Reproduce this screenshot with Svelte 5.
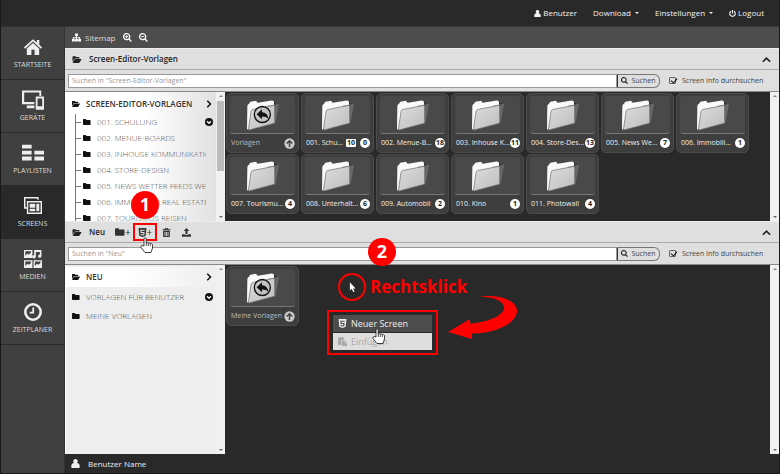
<script>
	const navItems = [
		{ label: 'STARTSEITE', icon: 'home' },
		{ label: 'GERÄTE', icon: 'devices' },
		{ label: 'PLAYLISTEN', icon: 'playlist' },
		{ label: 'SCREENS', icon: 'screens' },
		{ label: 'MEDIEN', icon: 'media' },
		{ label: 'ZEITPLANER', icon: 'clock' }
	];

	const templateTree = [
		{ label: '001. SCHULUNG', more: true },
		{ label: '002. MENUE-BOARDS' },
		{ label: '003. INHOUSE KOMMUNIKATION' },
		{ label: '004. STORE-DESIGN' },
		{ label: '005. NEWS WETTER FEEDS WE' },
		{ label: '006. IMMOBILIEN REAL ESTATE' },
		{ label: '007. TOURISMUS REISEN' }
	];

	const newTree = [{ label: 'VORLAGEN FÜR BENUTZER', more: true }, { label: 'MEINE VORLAGEN' }];

	const templates = [
		{ label: 'Vorlagen', up: true },
		{ label: '001. Schu...', folders: 10, count: 0 },
		{ label: '002. Menue-B...', count: 18 },
		{ label: '003. Inhouse K...', count: 11 },
		{ label: '004. Store-Des...', count: 13 },
		{ label: '005. News We...', count: 7 },
		{ label: '006. Immobili...', count: 1 },
		{ label: '007. Tourismu...', count: 4 },
		{ label: '008. Unterhalt...', count: 6 },
		{ label: '009. Automobil', count: 2 },
		{ label: '010. Kino', count: 1 },
		{ label: '011. Photowall', count: 4 }
	];

	let searchTemplates = $state('');
	let searchNew = $state('');
</script>

{#snippet icon(name)}
	<svg class="icon {name}" viewBox="0 0 16 16" aria-hidden="true">
		{#if name === 'home'}
			<path d="M8 1 0 8.3l1 1.2L8 3.2l7 6.3 1-1.2-2.4-2.2V1.8h-2.2v2.3zM8 4.4 2.5 9.3V15h4.1v-4.5h2.8V15h4.1V9.3z" />
		{:else if name === 'devices'}
			<path d="M0 1h14v4h-1.4V2.600H1.600v6.800H9V11H0zM3.500 12H9v2H3.500zM10 5.500h6v9.500h-6zm1.300 1.400v5.600h3.400V6.900z" fill-rule="evenodd" />
		{:else if name === 'playlist'}
			<path d="M0 2h7v2.800H0zM0 6.300h7v2.800H0zM0 10.600h7v2.800H0zM9 6.300h7v2.800H9zM9 10.600h7v2.800H9z" />
		{:else if name === 'screens'}
			<path d="M0 0h13v2.500h-1.300V1.300H1.300v7.900H2.500v1.300H0zM2.500 3.500H16V15H2.500zm1.300 1.300v8.900h10.900V4.800zM5 6h5v3.500H5zM5 10.500h5v2.200H5zM11 6h2.600v6.700H11z" fill-rule="evenodd" />
		{:else if name === 'media'}
			<path d="M0 0h7.500v7H0zm1.200 1.200v4l1.800-2 1.200 1 2-2v-1zM9 0h6.500v5.500a1.500 1.500 0 1 1-1.400-1.500V1.800h-3.600V6A1.500 1.500 0 1 1 9 4.500zM0 9h7.500v7H0zm1.200 1.200v4l1.800-2 1.200 1 2-1.600v-1.400zM8.500 9H16v7H8.500zm1.200 1.200v4l1.800-2 1.200 1 2-1.600v-1.400z" fill-rule="evenodd" />
		{:else if name === 'clock'}
			<path d="M8 0a8 8 0 1 1 0 16A8 8 0 0 1 8 0zm0 2.300a5.700 5.700 0 1 0 0 11.400A5.700 5.700 0 0 0 8 2.300zM7.400 4H9v5.300H5V7.800h2.400z" fill-rule="evenodd" />
		{:else if name === 'sitemap'}
			<path d="M5.500 1h5v4.500H8.800V7H14v3.300h2V15h-5v-4.700h1.500V8.500H8.800v1.800h1.700V15h-5v-4.700h1.700V8.500H3.500v1.800H5V15H0v-4.700h2V7h5.200V5.500H5.500z" />
		{:else if name === 'zoom-in' || name === 'zoom-out' || name === 'magnifier'}
			<path d="M6.500 0a6.500 6.500 0 0 1 5.300 10.200l4 4-1.700 1.700-4-4A6.500 6.500 0 1 1 6.500 0zm0 2.200a4.300 4.300 0 1 0 0 8.600 4.300 4.300 0 0 0 0-8.600z" fill-rule="evenodd" />
			{#if name !== 'magnifier'}<path d="M3.800 5.700h5.400v1.600H3.800z" />{/if}
			{#if name === 'zoom-in'}<path d="M5.700 3.800h1.600v5.400H5.700z" />{/if}
		{:else if name === 'folder-open'}
			<path d="M0 12V3.500Q0 2 1.500 2H5q1.200 0 1.200 1.500H11q1.500 0 1.500 1.500v1H5Q3.500 6 2.600 7.500zM4.800 7.200H15.500q.8 0 .3.900l-3 4.900q-.6 1-1.800 1H.9q-.8 0-.3-.9l2.700-4.900q.5-1 1.500-1z" />
		{:else if name === 'folder'}
			<path d="M0 3.500Q0 2 1.500 2H5q1.500 0 1.500 1.800h7.200q1.500 0 1.500 1.500v7.200q0 1.500-1.500 1.500H1.500Q0 14 0 12.500z" />
		{:else if name === 'chevron-up'}
			<path d="m1.500 12 6.500-6.500 6.500 6.500" fill="none" stroke="currentColor" stroke-width="3" />
		{:else if name === 'chevron-right'}
			<path d="m4.500 1.500 6.500 6.500-6.500 6.500" fill="none" stroke="currentColor" stroke-width="3" />
		{:else if name === 'more'}
			<circle cx="8" cy="8" r="8" /><path d="m4 6.500 4 4 4-4" fill="none" stroke="#fff" stroke-width="2.500" />
		{:else if name === 'html5'}
			<path d="M1 0h14l-1.300 13.800L8 16l-5.700-2.200zm3 3 .5 5.700h5l-.2 2.300L8 11.500 6.500 11l-.1-1H4.600l.2 2.400L8 13.500l3.200-1.100.6-5.500H6.300L6.200 5h5.700l.2-2z" fill-rule="evenodd" />
		{:else if name === 'trash'}
			<path d="M5 2V0h6v2h4v2H1V2zm1.500 0h3v-.8h-3zM2 5h12v9.500q0 1.500-1.500 1.500h-9Q2 16 2 14.500zm2.500 2v7H6V7zM7.200 7v7h1.600V7zM10 7v7h1.500V7z" fill-rule="evenodd" />
		{:else if name === 'upload'}
			<path d="m8 0 5 5.500h-3.200V11H6.200V5.500H3zM0 11h5v1.500h6V11h5v4.500H0z" />
		{:else if name === 'user'}
			<path d="M8 0a4 4 0 0 1 2.500 7.200Q16 8 15.500 14q0 2-1.500 2H2Q.5 16 .5 14 0 8 5.500 7.200A4 4 0 0 1 8 0z" />
		{:else if name === 'power'}
			<path d="M4.500 3a6.300 6.300 0 1 0 7 0M8 0v8" fill="none" stroke="currentColor" stroke-width="2.600" />
		{:else if name === 'paste'}
			<path d="M0 1h3l1-1h3l1 1h3v4H6v9H0zM7 6h5v4h4v6H7zM13 6l3 3h-3z" />
		{:else if name === 'arrow-up'}
			<circle cx="8" cy="8" r="7.500" /><path d="M8 13V4M4 8l4-4 4 4" fill="none" stroke="#444" stroke-width="2.200" />
		{/if}
	</svg>
{/snippet}

{#snippet hand()}
	<svg class="hand" viewBox="0 0 14 16" aria-hidden="true">
		<path d="M4 9V1.500Q5 0 6.200 1.500V6q1.200-.8 2 .3 1.200-.7 2 .4 1.600-.6 2.300.8V11l-1.500 4.500h-6L1 10.500Q.5 8.500 2.500 8.500z" fill="#fff" stroke="#111" stroke-width=".8" />
		<path d="M6.300 6v3M8.300 6.500V9M10.300 7v2" stroke="#111" stroke-width=".7" />
	</svg>
{/snippet}

{#snippet card(item)}
	<a class="card" class:up={item.up} href="#folder">
		<span class="thumb">
			<svg class="picture" viewBox="0 0 96 92" aria-hidden="true">
				<path d="m2 91 2-74q0-5 5-7l3-5 17-3 4 6 45-7q5 0 5 7l7 1-9 57z" fill="#222" opacity=".5" />
				<path d="m0 88 1-70q0-5 5-7l4-6 17-3 5 6 42-7q7-1 7 6v57z" fill="#fafafa" />
				<path d="m62 17 34-6-10 56-24 5z" fill="#777" opacity=".7" />
				<path d="M12 34q1-5 5-6l61-12q5-1 5 4v49L4 90z" fill="url(#face)" stroke="#666" stroke-width="2" />
				{#if item.up}
					<circle cx="46" cy="43" r="24" fill="#bbb" fill-opacity=".6" stroke="#111" stroke-width="4" />
					<path d="m29 42 16-15v9q17 0 19 20-7-8-19-7v8z" fill="#111" />
				{/if}
			</svg>
		</span>
		<span class="caption">
			<span class="name">{item.label}</span>
			{#if item.folders}<span class="badge tab">{item.folders}</span>{/if}
			{#if item.up}{@render icon('arrow-up')}{:else}<span class="badge">{item.count}</span>{/if}
		</span>
	</a>
{/snippet}

{#snippet scrollbar(thumb)}
	<div class="scrollbar" aria-hidden="true">
		<i class="to-top"></i>
		{#if thumb}<i class="grip"></i>{/if}
		<i class="to-bottom"></i>
	</div>
{/snippet}

<svg class="defs" width="0" height="0" aria-hidden="true">
	<linearGradient id="face" x1="0" y1="0" x2="1" y2="1">
		<stop offset="0" stop-color="#ddd" />
		<stop offset="1" stop-color="#bdbdbd" />
	</linearGradient>
</svg>

<div class="app">
	<header>
		<a href="#user">{@render icon('user')}Benutzer</a>
		<a href="#download">Download<i class="caret"></i></a>
		<a href="#settings">Einstellungen<i class="caret"></i></a>
		<a href="#logout">{@render icon('power')}Logout</a>
	</header>

	<nav class="sidebar">
		{#each navItems as item}
			<a href="#{item.icon}" class:active={item.icon === 'screens'}>
				{@render icon(item.icon)}
				{item.label}
			</a>
		{/each}
	</nav>

	<main>
		<div class="toolbar">
			<a href="#sitemap">{@render icon('sitemap')}Sitemap</a>
			<button aria-label="Vergrößern">{@render icon('zoom-in')}</button>
			<button aria-label="Verkleinern">{@render icon('zoom-out')}</button>
		</div>

		<section class="panel">
			<div class="head">
				{@render icon('folder-open')}
				<h2>Screen-Editor-Vorlagen</h2>
				<button class="collapse" aria-label="Einklappen">{@render icon('chevron-up')}</button>
			</div>
			<form class="search">
				<input type="text" aria-label="Suchen" placeholder={'Suchen in "Screen-Editor-Vorlagen"'} bind:value={searchTemplates} />
				<button type="button">{@render icon('magnifier')}Suchen</button>
				<label><input type="checkbox" checked />Screen Info durchsuchen</label>
			</form>
			<div class="body first">
				<div class="tree nested">
					<div class="rows">
						<a class="root" href="#root">{@render icon('folder-open')}<span>SCREEN-EDITOR-VORLAGEN</span>{@render icon('chevron-right')}</a>
						<div class="branch">
							{#each templateTree as row}
								<a href="#row" class:plain={!row.more}>{@render icon('folder')}<span>{row.label}</span>{#if row.more}{@render icon('more')}{/if}</a>
							{/each}
						</div>
					</div>
					{@render scrollbar(true)}
				</div>
				<div class="cards">
					{#each templates as item}
						{@render card(item)}
					{/each}
				</div>
				{@render scrollbar(false)}
			</div>
		</section>

		<section class="panel grow">
			<div class="head">
				{@render icon('folder-open')}
				<h2>Neu</h2>
				<div class="actions">
					<button aria-label="Neuer Ordner">{@render icon('folder')}+</button>
					<button class="marked" aria-label="Neuer Screen">{@render icon('html5')}+{@render hand()}<b class="step one">1</b></button>
					<button aria-label="Löschen">{@render icon('trash')}</button>
					<button aria-label="Hochladen">{@render icon('upload')}</button>
				</div>
				<button class="collapse" aria-label="Einklappen">{@render icon('chevron-up')}</button>
			</div>
			<form class="search">
				<input type="text" aria-label="Suchen" placeholder={'Suchen in "Neu"'} bind:value={searchNew} />
				<button type="button">{@render icon('magnifier')}Suchen</button>
				<label><input type="checkbox" checked />Screen Info durchsuchen</label>
			</form>
			<div class="body">
				<div class="tree">
					<div class="rows">
						<a class="root" href="#root">{@render icon('folder-open')}<span>NEU</span>{@render icon('chevron-right')}</a>
						{#each newTree as row}
							<a href="#row">{@render icon('folder')}<span>{row.label}</span>{#if row.more}{@render icon('more')}{/if}</a>
						{/each}
					</div>
					{@render scrollbar(false)}
				</div>
				<div class="cards">
					{@render card({ label: 'Meine Vorlagen', up: true })}
				</div>
				{@render scrollbar(false)}

				<b class="step two">2</b>
				<div class="click-spot">
					<svg viewBox="0 0 8 12" aria-hidden="true"><path d="M1 0v9.500l2.200-2 1.500 3.700 1.600-.7L4.800 7h2.700z" fill="#fff" /></svg>
				</div>
				<strong class="click-label">Rechtsklick</strong>
				<div class="context">
					<button>{@render icon('html5')}Neuer Screen</button>
					<button disabled>{@render icon('paste')}Einfügen</button>
					{@render hand()}
				</div>
				<svg class="arrow" viewBox="0 0 70 46" aria-hidden="true">
					<path d="M32 1.500C52-.500 68 5 69 15.500 69 28 49 38 24 38.500V44L0 37l22-13v4.500C42 27 56 20 56 12.500 55.500 5 45 2.300 32 1.500z" fill="#f00" />
				</svg>
			</div>
		</section>
	</main>

	<footer>{@render icon('user')}Benutzer Name</footer>
</div>

<style>
	:global(body) {
		margin: 0;
		background: #292929;
	}

	.app,
	.app * {
		box-sizing: border-box;
	}

	.defs {
		position: absolute;
	}

	.app {
		display: grid;
		grid-template-columns: 64px minmax(0, 1fr);
		grid-template-rows: 26px 1fr 19px;
		min-height: 100vh;
		border: 1px solid #181818;
		border-top: 0;
		background: #292929;
		color: #ddd;
		font-family: 'Open Sans', sans-serif;
		font-size: 8px;
		line-height: 12px;
	}

	a {
		color: inherit;
		text-decoration: none;
	}

	button {
		display: flex;
		align-items: center;
		padding: 0;
		border: 0;
		background: none;
		color: inherit;
		font: inherit;
	}

	.icon {
		flex: none;
		width: 9px;
		height: 9px;
		fill: currentColor;
	}

	header {
		grid-column: 1 / 3;
		display: flex;
		align-items: center;
		justify-content: flex-end;
		gap: 16px;
		padding-right: 15px;
		color: #f2f2f2;
	}

	header a {
		display: flex;
		align-items: center;
		gap: 2px;
	}

	header .icon {
		width: 7px;
		height: 7px;
	}

	.caret {
		margin-left: 2px;
		border: 2px solid transparent;
		border-top-color: #eee;
		border-bottom: 0;
	}

	.sidebar {
		grid-row: 2 / 4;
		background: #404040;
		border-right: 1px solid #333;
		border-top: 1px solid #333;
	}

	.sidebar a {
		display: flex;
		flex-direction: column;
		align-items: center;
		gap: 4px;
		height: 53px;
		padding-top: 11px;
		border-bottom: 1px solid #292929;
		font-size: 7px;
		line-height: 9px;
	}

	.sidebar .active {
		background: #292929;
	}

	.sidebar .icon {
		width: 18px;
		height: 18px;
		color: #eee;
	}

	.sidebar .devices,
	.sidebar .playlist {
		width: 22px;
		height: 22px;
		margin: -2px 0;
	}

	main {
		display: flex;
		flex-direction: column;
		min-width: 0;
	}

	.toolbar {
		display: flex;
		align-items: center;
		gap: 7px;
		height: 22px;
		padding-left: 7px;
		border-top: 1px solid #383838;
		background: #4d4d4d;
	}

	.toolbar a {
		display: flex;
		align-items: center;
		gap: 4px;
	}

	.toolbar .icon {
		color: #fff;
	}

	.panel {
		display: flex;
		flex-direction: column;
	}

	.grow {
		flex: 1;
	}

	.head {
		display: flex;
		align-items: center;
		height: 22px;
		padding: 0 8px 0 7px;
		border-top: 1px solid #eee;
		border-bottom: 1px solid #aaa;
		background: #dfdfdf;
		color: #222;
	}

	.head h2 {
		margin: 0 0 0 7px;
		font-size: 8px;
		font-weight: 600;
	}

	.head > .icon {
		width: 10px;
	}

	.collapse {
		margin-left: auto;
	}

	.actions {
		display: flex;
		align-items: center;
		margin-left: 8px;
	}

	.actions button {
		justify-content: center;
		width: 20px;
		height: 18px;
		font-size: 10px;
		color: #333;
	}

	.actions .folder {
		width: 10px;
		height: 10px;
	}

	.actions .marked {
		position: relative;
		width: 24px;
		border: 2px solid #f00;
	}

	.hand {
		position: absolute;
		z-index: 2;
		width: 14px;
		height: 16px;
		top: 12px;
		left: 5px;
	}

	.search {
		display: flex;
		align-items: center;
		height: 22px;
		padding-left: 3px;
		border-bottom: 1px solid #888;
		background: #dfdfdf;
		color: #444;
		font-size: 7px;
	}

	.search input[type='text'] {
		flex: 1;
		min-width: 0;
		height: 14px;
		padding: 0 3px;
		border: 1px solid #999;
		border-radius: 0;
		background: #fff;
		font: inherit;
		outline: 0;
	}

	.search input::placeholder {
		color: #999;
		opacity: 1;
	}

	.search button {
		justify-content: center;
		gap: 3px;
		width: 43px;
		height: 14px;
		border: 1px solid #777;
		border-left-color: #333;
		border-radius: 0 6px 6px 0;
	}

	.search .icon {
		width: 7px;
		height: 7px;
		color: #111;
	}

	.search label {
		display: flex;
		align-items: center;
		gap: 6px;
		width: 119px;
		padding-left: 9px;
		white-space: nowrap;
	}

	.search input[type='checkbox'] {
		position: relative;
		appearance: none;
		width: 7px;
		height: 7px;
		margin: 0;
		border: 1px solid #666;
		border-radius: 1px;
	}

	.search input:checked::after {
		content: '';
		position: absolute;
		top: -1px;
		left: 2px;
		width: 3px;
		height: 5px;
		border: solid #111;
		border-width: 0 1px 1px 0;
		transform: rotate(40deg);
	}

	.body {
		position: relative;
		display: flex;
		flex: 1;
		background: #292929;
	}

	.first {
		flex: none;
		height: 129px;
	}

	.tree {
		display: flex;
		width: 160px;
		overflow: hidden;
		border-left: 1px solid #fff;
		background: #eee;
		color: #555;
		font-weight: 300;
	}

	.nested {
		background: linear-gradient(90deg, #fff 50%, #ddd);
	}

	.rows {
		flex: 1;
		min-width: 0;
		padding-top: 2px;
	}

	.rows a {
		display: flex;
		align-items: center;
		gap: 6px;
		height: 19px;
		padding: 0 3px 0 6px;
	}

	.rows span {
		flex: 1;
		overflow: hidden;
		white-space: nowrap;
	}

	.rows .icon {
		width: 8px;
		height: 8px;
		color: #111;
	}

	.rows .root {
		height: 20px;
		background: linear-gradient(90deg, #fff 40%, #eee);
		color: #333;
		font-weight: 600;
	}

	.nested .root {
		background: none;
	}

	.branch {
		margin-left: 9px;
		border-left: 1px solid #777;
	}

	.branch a {
		height: 16px;
		padding-left: 0;
	}

	.branch .plain {
		padding-right: 10px;
	}

	.branch a::before {
		content: '';
		width: 5px;
		margin-right: -4px;
		border-top: 1px solid #777;
	}

	.scrollbar {
		display: flex;
		flex-direction: column;
		align-items: center;
		width: 9px;
		padding: 3px 0;
		background: #f1f1f1;
	}

	.to-top,
	.to-bottom {
		border: 2px solid transparent;
	}

	.to-top {
		border-top: 0;
		border-bottom-color: #888;
	}

	.to-bottom {
		margin-top: auto;
		border-bottom: 0;
		border-top-color: #666;
	}

	.grip {
		width: 7px;
		height: 70px;
		margin-top: 4px;
		background: #bbb;
	}

	.cards {
		flex: 1;
		display: flex;
		flex-wrap: wrap;
		align-content: flex-start;
		gap: 1px 2px;
		padding: 1px;
	}

	.card {
		width: 73px;
		height: 60px;
		padding: 2px 3px;
		border: 1px solid #4b4b4b;
		border-radius: 5px;
		background: #3e3e3e;
		color: #eee;
		font-size: 7px;
	}

	.thumb {
		display: flex;
		justify-content: center;
		height: 38px;
		padding-top: 4px;
		border-bottom: 1px solid #777;
		border-radius: 3px;
		background: #494949;
	}

	.picture {
		width: 32px;
		height: 31px;
	}

	.caption {
		display: flex;
		align-items: center;
		height: 16px;
		margin-top: 1px;
		padding-left: 1px;
		white-space: nowrap;
	}

	.name {
		flex: 1;
		min-width: 0;
	}

	.up .name {
		color: #bbb;
	}

	.badge {
		flex: none;
		width: 10px;
		height: 10px;
		border-radius: 5px;
		background: #fff;
		color: #222;
		font-weight: 700;
		line-height: 10px;
		text-align: center;
	}

	.tab {
		height: 8px;
		margin-right: 4px;
		border-radius: 1px;
		line-height: 8px;
	}

	.card .icon {
		width: 11px;
		height: 11px;
		color: #ccc;
	}

	.step {
		position: absolute;
		z-index: 3;
		width: 28px;
		height: 28px;
		border-radius: 50%;
		background: #f00;
		color: #fff;
		font-size: 18px;
		font-weight: 700;
		line-height: 27px;
		text-align: center;
	}

	.one {
		top: -34px;
		left: -4px;
	}

	.two {
		top: -27px;
		left: 303px;
	}

	.click-spot {
		position: absolute;
		top: 8px;
		left: 273px;
		display: grid;
		place-items: center;
		width: 28px;
		height: 28px;
		border: 2px solid #f00;
		border-radius: 50%;
	}

	.click-spot svg {
		width: 7px;
		height: 11px;
	}

	.click-label {
		position: absolute;
		top: 10px;
		left: 305px;
		color: #f00;
		font-size: 17px;
		line-height: 24px;
	}

	.context {
		position: absolute;
		top: 45px;
		left: 262px;
		width: 111px;
		padding: 3px 4px;
		border: 2px solid #f00;
		font-size: 9px;
	}

	.context button {
		gap: 4px;
		width: 100%;
		height: 17px;
		padding-left: 5px;
		background: #4d4d4d;
		color: #eee;
	}

	.context button:disabled {
		margin-top: 1px;
		background: #dedede;
		color: #aaa;
	}

	.context .hand {
		top: 16px;
		left: 43px;
	}

	.arrow {
		position: absolute;
		top: 30px;
		left: 383px;
		width: 70px;
		height: 46px;
	}

	footer {
		display: flex;
		align-items: center;
		gap: 8px;
		padding-left: 6px;
		color: #eee;
	}
</style>
